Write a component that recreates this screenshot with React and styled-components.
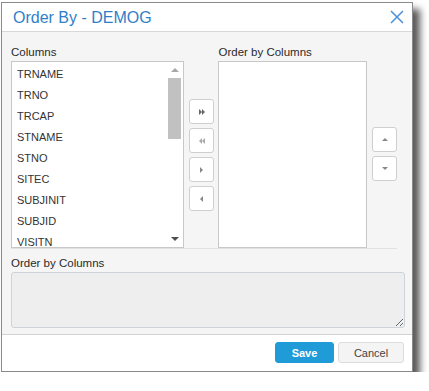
import React from "react";
import styled, { createGlobalStyle } from "styled-components";

const Global = createGlobalStyle`
  html, body { margin: 0; padding: 0; background: #ffffff; }
  body { font-family: "Liberation Sans", Arial, sans-serif; }
`;

const Dialog = styled.div`
  margin: 2px 0 0 1px;
  width: 410px;
  height: 368px;
  border: 1px solid #8a8a8a;
  background: #f5f5f5;
  box-shadow: 7px 7px 7px rgba(0, 0, 0, 0.65);
  display: flex;
  flex-direction: column;
  box-sizing: content-box;
`;

const Header = styled.div`
  height: 28px;
  background: #ffffff;
  border-bottom: 1px solid #d8d8d8;
  display: flex;
  align-items: center;
  justify-content: space-between;
  padding: 0 8px 0 11px;
  flex-shrink: 0;
`;

const Title = styled.div`
  color: #2f7fc8;
  font-size: 16px;
  padding-top: 1px;
`;

const Close = styled.button`
  border: 0;
  background: none;
  padding: 0;
  width: 14px;
  height: 14px;
  display: flex;
  cursor: pointer;
`;

const Body = styled.div`
  flex: 1;
  padding: 14px 8px 0 9px;
  display: flex;
  flex-direction: column;
`;

const Label = styled.div`
  font-size: 11.5px;
  color: #2a2a2a;
  line-height: 13px;
  height: 15px;
`;

const Row = styled.div`
  display: flex;
  width: 386px;
  border-bottom: 1px solid #e2e2e2;
`;

const Col = styled.div`
  display: flex;
  flex-direction: column;
  width: ${(p) => p.$w}px;
`;

const ListBox = styled.div`
  height: 185px;
  background: #fff;
  border: 1px solid #c8c8c8;
  display: flex;
  overflow: hidden;
`;

const Items = styled.div`
  flex: 1;
  padding: 4px 0 0 5px;
`;

const Item = styled.div`
  font-size: 11px;
  color: #333;
  height: 21px;
  line-height: 16px;
`;

const Scrollbar = styled.div`
  width: 15px;
  margin-right: 1px;
  display: flex;
  flex-direction: column;
  align-items: center;
  background: #fff;
`;

const Arrow = styled.div`
  height: 16px;
  display: flex;
  align-items: center;
  justify-content: center;
`;

const Thumb = styled.div`
  width: 13px;
  height: 61px;
  background: #c1c1c1;
`;

const Spacer = styled.div`
  flex: 1;
`;

const BtnCol = styled.div`
  display: flex;
  flex-direction: column;
  gap: 4px;
  padding-top: ${(p) => p.$top}px;
  margin-left: ${(p) => p.$ml}px;
  margin-right: ${(p) => p.$mr}px;
`;

const SmallBtn = styled.button`
  width: 25px;
  height: 25px;
  background: #fff;
  border: 1px solid #cfcfcf;
  border-radius: 3px;
  padding: 0;
  display: flex;
  align-items: center;
  justify-content: center;
`;

const Section = styled.div`
  padding-top: 8px;
  display: flex;
  flex-direction: column;
`;

const TextArea = styled.textarea`
  width: 394px;
  height: 56px;
  box-sizing: border-box;
  background: #eeeeee;
  border: 1px solid #cdd3d8;
  border-radius: 3px;
  resize: vertical;
  font-family: inherit;
  margin: 0;
`;

const Footer = styled.div`
  height: 37px;
  background: #fff;
  border-top: 1px solid #d2d2d2;
  display: flex;
  align-items: flex-start;
  justify-content: flex-end;
  padding: 7px 8px 0 0;
  gap: 4px;
  box-sizing: border-box;
  flex-shrink: 0;
`;

const Button = styled.button`
  height: 21px;
  width: ${(p) => p.$w}px;
  border-radius: 3px;
  font-family: inherit;
  font-size: 11px;
  padding: 0;
  cursor: pointer;
  background: ${(p) => (p.$primary ? "#1f9bd7" : "#f4f4f4")};
  color: ${(p) => (p.$primary ? "#fff" : "#444")};
  font-weight: ${(p) => (p.$primary ? "bold" : "normal")};
  border: 1px solid ${(p) => (p.$primary ? "#1f9bd7" : "#dcdcdc")};
`;

const Tri = ({ dir, double, color = "#777", size = 4 }) => {
  const s = size;
  const shapes = {
    up: `0,${s} ${s},0 ${2 * s},${s}`,
    down: `0,0 ${2 * s},0 ${s},${s}`,
    right: `0,0 ${s},${s} 0,${2 * s}`,
    left: `${s},0 0,${s} ${s},${2 * s}`,
  };
  const horiz = dir === "left" || dir === "right";
  const w = horiz ? (double ? 2 * s : s) : 2 * s;
  const h = horiz ? 2 * s : s;
  return (
    <svg width={w} height={h} viewBox={`0 0 ${w} ${h}`}>
      <polygon points={shapes[dir]} fill={color} />
      {double && (
        <polygon points={shapes[dir]} fill={color} transform={`translate(${s},0)`} />
      )}
    </svg>
  );
};

const leftItems = ["TRNAME", "TRNO", "TRCAP", "STNAME", "STNO", "SITEC", "SUBJINIT", "SUBJID", "VISITN"];

export default function App() {
  return (
    <>
      <Global />
      <Dialog>
        <Header>
          <Title>Order By - DEMOG</Title>
          <Close aria-label="close">
            <svg width="14" height="14" viewBox="0 0 14 14">
              <path d="M1 1L13 13M13 1L1 13" stroke="#4a90d6" strokeWidth="1.5" />
            </svg>
          </Close>
        </Header>
        <Body>
          <Row>
            <Col $w={174}>
              <Label>Columns</Label>
              <ListBox>
                <Items>
                  {leftItems.map((t) => (
                    <Item key={t}>{t}</Item>
                  ))}
                </Items>
                <Scrollbar>
                  <Arrow>
                    <Tri dir="up" color="#a8a8a8" size={4} />
                  </Arrow>
                  <Thumb />
                  <Spacer />
                  <Arrow>
                    <Tri dir="down" color="#505050" size={4} />
                  </Arrow>
                </Scrollbar>
              </ListBox>
            </Col>
            <BtnCol $top={53} $ml={5} $mr={4}>
              <SmallBtn><Tri dir="right" double size={3} color="#666" /></SmallBtn>
              <SmallBtn><Tri dir="left" double size={3} color="#aaa" /></SmallBtn>
              <SmallBtn><Tri dir="right" size={3} color="#888" /></SmallBtn>
              <SmallBtn><Tri dir="left" size={3} color="#888" /></SmallBtn>
            </BtnCol>
            <Col $w={149}>
              <Label>Order by Columns</Label>
              <ListBox />
            </Col>
            <BtnCol $top={81} $ml={5} $mr={0}>
              <SmallBtn><Tri dir="up" size={3} color="#888" /></SmallBtn>
              <SmallBtn><Tri dir="down" size={3} color="#888" /></SmallBtn>
            </BtnCol>
          </Row>
          <Section>
            <Label>Order by Columns</Label>
            <TextArea />
          </Section>
        </Body>
        <Footer>
          <Button $primary $w={59}>Save</Button>
          <Button $w={66}>Cancel</Button>
        </Footer>
      </Dialog>
    </>
  );
}
